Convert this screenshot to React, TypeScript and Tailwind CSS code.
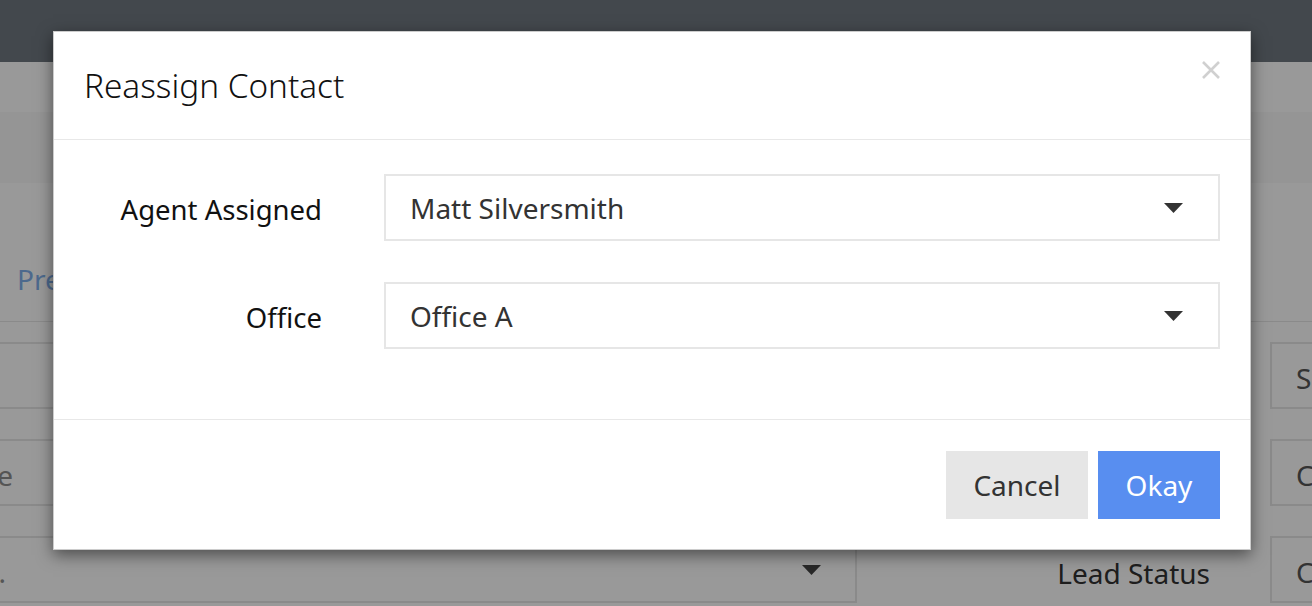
import { ReactNode } from "react"

function Caret({ className = "" }: { className?: string }) {
  return (
    <svg width="19" height="10" viewBox="0 0 19 10" className={className}>
      <path d="M0 0 H19 L9.5 10 Z" fill="currentColor" />
    </svg>
  )
}

function SelectBox({ value }: { value: string }) {
  return (
    <div className="flex h-[67px] flex-1 items-center justify-between border-2 border-[#e6e6e6] bg-white pl-[24px] pr-[35px] text-[28px] text-[#333]">
      <span>{value}</span>
      <Caret className="text-[#333]" />
    </div>
  )
}

function FormRow({ label, children }: { label: string; children: ReactNode }) {
  return (
    <div className="flex items-center">
      <div className="mt-[4px] w-[268px] text-right text-[27.5px] text-[#111]">{label}</div>
      <div className="ml-[62px] flex flex-1">{children}</div>
    </div>
  )
}

function BgRow({
  left,
  leftClip = "w-[13px]",
  label,
  right,
  caret,
}: {
  left?: string
  leftClip?: string
  label?: string
  right: string
  caret?: boolean
}) {
  return (
    <div className="flex h-[67px] items-stretch">
      <div className="-ml-[2px] flex w-[859px] shrink-0 items-center justify-between border-2 border-[#e6e6e6] pr-[34px]">
        <div className={`flex justify-end whitespace-nowrap pt-[5px] text-[28px] text-[#8e8e8e] ${leftClip}`}>{left}</div>
        {caret && <Caret className="text-[#444]" />}
      </div>
      <div className="flex w-[413px] shrink-0 items-center justify-end pr-[60px] pt-[6px] text-[28px] text-[#333]">
        {label}
      </div>
      <div className="flex min-w-0 flex-1 items-center overflow-hidden whitespace-nowrap border-2 border-r-0 border-[#e6e6e6] pl-[24px] pt-[4px] text-[28px] text-[#555]">
        {right}
      </div>
    </div>
  )
}

export default function App() {
  return (
    <div className="relative h-[606px] w-[1312px] overflow-hidden bg-white font-['Noto_Sans','Open_Sans',sans-serif]">
      {/* page behind the dialog */}
      <div className="flex flex-col">
        <div className="h-[62px] bg-[#707880]" />
        <div className="h-[50px] bg-white" />
        <div className="h-[71px] bg-[#f8f8f8]" />
        <div className="flex h-[139px] items-end border-b border-[#e6e6e6] pb-[21px] pl-[17px]">
          <span className="text-[28px] text-[#7fb0ec]">Preferences</span>
        </div>
        <div className="flex flex-col gap-[30px] pt-[20px]">
          <BgRow right="Source" />
          <BgRow left="Name" right="City" />
          <BgRow left="Select." leftClip="w-[6px]" label="Lead Status" right="Cold" caret />
        </div>
      </div>

      <div className="absolute inset-0 bg-black/40" />

      {/* dialog */}
      <div className="absolute left-[53px] top-[31px] w-[1198px] border border-black/20 bg-white shadow-[0_5px_15px_rgba(0,0,0,0.5)]">
        <div className="flex h-[108px] items-center justify-between border-b border-[#e8e8e8] pl-[30px] pr-[30px]">
          <h3 className="text-[33.3px] font-light leading-none text-[#111]">Reassign Contact</h3>
          <button className="-mt-[32px] text-[#d0d0d0]">
            <svg width="18" height="18" viewBox="0 0 18 18">
              <path d="M1 1 L17 17 M17 1 L1 17" stroke="currentColor" strokeWidth="2.6" />
            </svg>
          </button>
        </div>

        <div className="flex flex-col gap-[41px] pb-[70px] pr-[30px] pt-[34px]">
          <FormRow label="Agent Assigned">
            <SelectBox value="Matt Silversmith" />
          </FormRow>
          <FormRow label="Office">
            <SelectBox value="Office A" />
          </FormRow>
        </div>

        <div className="flex justify-end gap-[10px] border-t border-[#e8e8e8] pb-[30px] pr-[30px] pt-[31px]">
          <button className="h-[68px] w-[142px] bg-[#e6e6e6] text-[28px] text-[#333]">Cancel</button>
          <button className="h-[68px] w-[122px] bg-[#588ef0] text-[28px] text-white">Okay</button>
        </div>
      </div>
    </div>
  )
}
